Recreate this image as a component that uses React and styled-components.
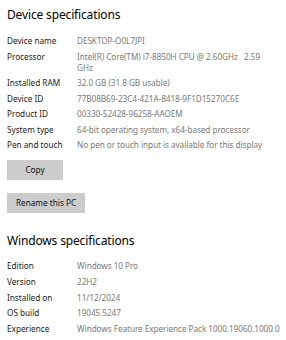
import styled, { createGlobalStyle } from "styled-components";

const GlobalStyle = createGlobalStyle`
    html, body {
        margin: 0;
        padding: 0;
        background: #ffffff;
    }

    body {
        font-family: "Noto Sans", "Open Sans", sans-serif;
        color: #000000;
    }
`;

const Page = styled.div`
    width: 286px;
    height: 340px;
    padding: 7px 7px 0;
    box-sizing: border-box;
    overflow: hidden;
`;

const Heading = styled.h2`
    margin: ${(p) => p.$top || 0}px 0 0;
    font-size: 12px;
    font-weight: 400;
    line-height: 16px;
    letter-spacing: -0.15px;
    color: #000000;
`;

const SpecTable = styled.div`
    display: grid;
    grid-template-columns: 70px 1fr;
    row-gap: ${(p) => p.$gap}px;
    margin-top: ${(p) => p.$top}px;
    font-size: 8.2px;
    line-height: 11px;
`;

const Label = styled.div`
    color: #1a1a1a;
    white-space: nowrap;
`;

const Value = styled.div`
    color: #7a7a7a;
    white-space: nowrap;
    letter-spacing: -0.05px;
`;

const Button = styled.button`
    display: block;
    height: 20px;
    padding: 0 ${(p) => p.$pad || 9}px;
    min-width: ${(p) => p.$min || 0}px;
    border: none;
    background: #cccccc;
    color: #111111;
    font-family: inherit;
    font-size: 8.2px;
    margin-top: ${(p) => p.$top}px;
    cursor: pointer;
`;

const device = [
    ["Device name", "DESKTOP-O0L7JPI"],
    ["Processor", <>Intel(R) Core(TM) i7-8850H CPU @ 2.60GHz&nbsp;&nbsp; 2.59<br />GHz</>],
    ["Installed RAM", "32.0 GB (31.8 GB usable)"],
    ["Device ID", "77B08B69-23C4-421A-8418-9F1D15270C6E"],
    ["Product ID", "00330-52428-96258-AAOEM"],
    ["System type", "64-bit operating system, x64-based processor"],
    ["Pen and touch", "No pen or touch input is available for this display"],
];

const windows = [
    ["Edition", "Windows 10 Pro"],
    ["Version", "22H2"],
    ["Installed on", "11/12/2024"],
    ["OS build", "19045.5247"],
    ["Experience", "Windows Feature Experience Pack 1000.19060.1000.0"],
];

const Specs = ({ rows, top, gap }) => (
    <SpecTable $top={top} $gap={gap}>
        {rows.map(([label, value]) => (
            <div key={label} style={{ display: "contents" }}>
                <Label>{label}</Label>
                <Value>{value}</Value>
            </div>
        ))}
    </SpecTable>
);

export default function App() {
    return (
        <>
            <GlobalStyle />
            <Page>
                <Heading>Device specifications</Heading>
                <Specs rows={device} top={12} gap={4.5} />
                <Button $top={9.5} $min={56}>Copy</Button>
                <Button $top={13}>Rename this PC</Button>
                <Heading $top={20}>Windows specifications</Heading>
                <Specs rows={windows} top={11.5} gap={4.75} />
            </Page>
        </>
    );
}
